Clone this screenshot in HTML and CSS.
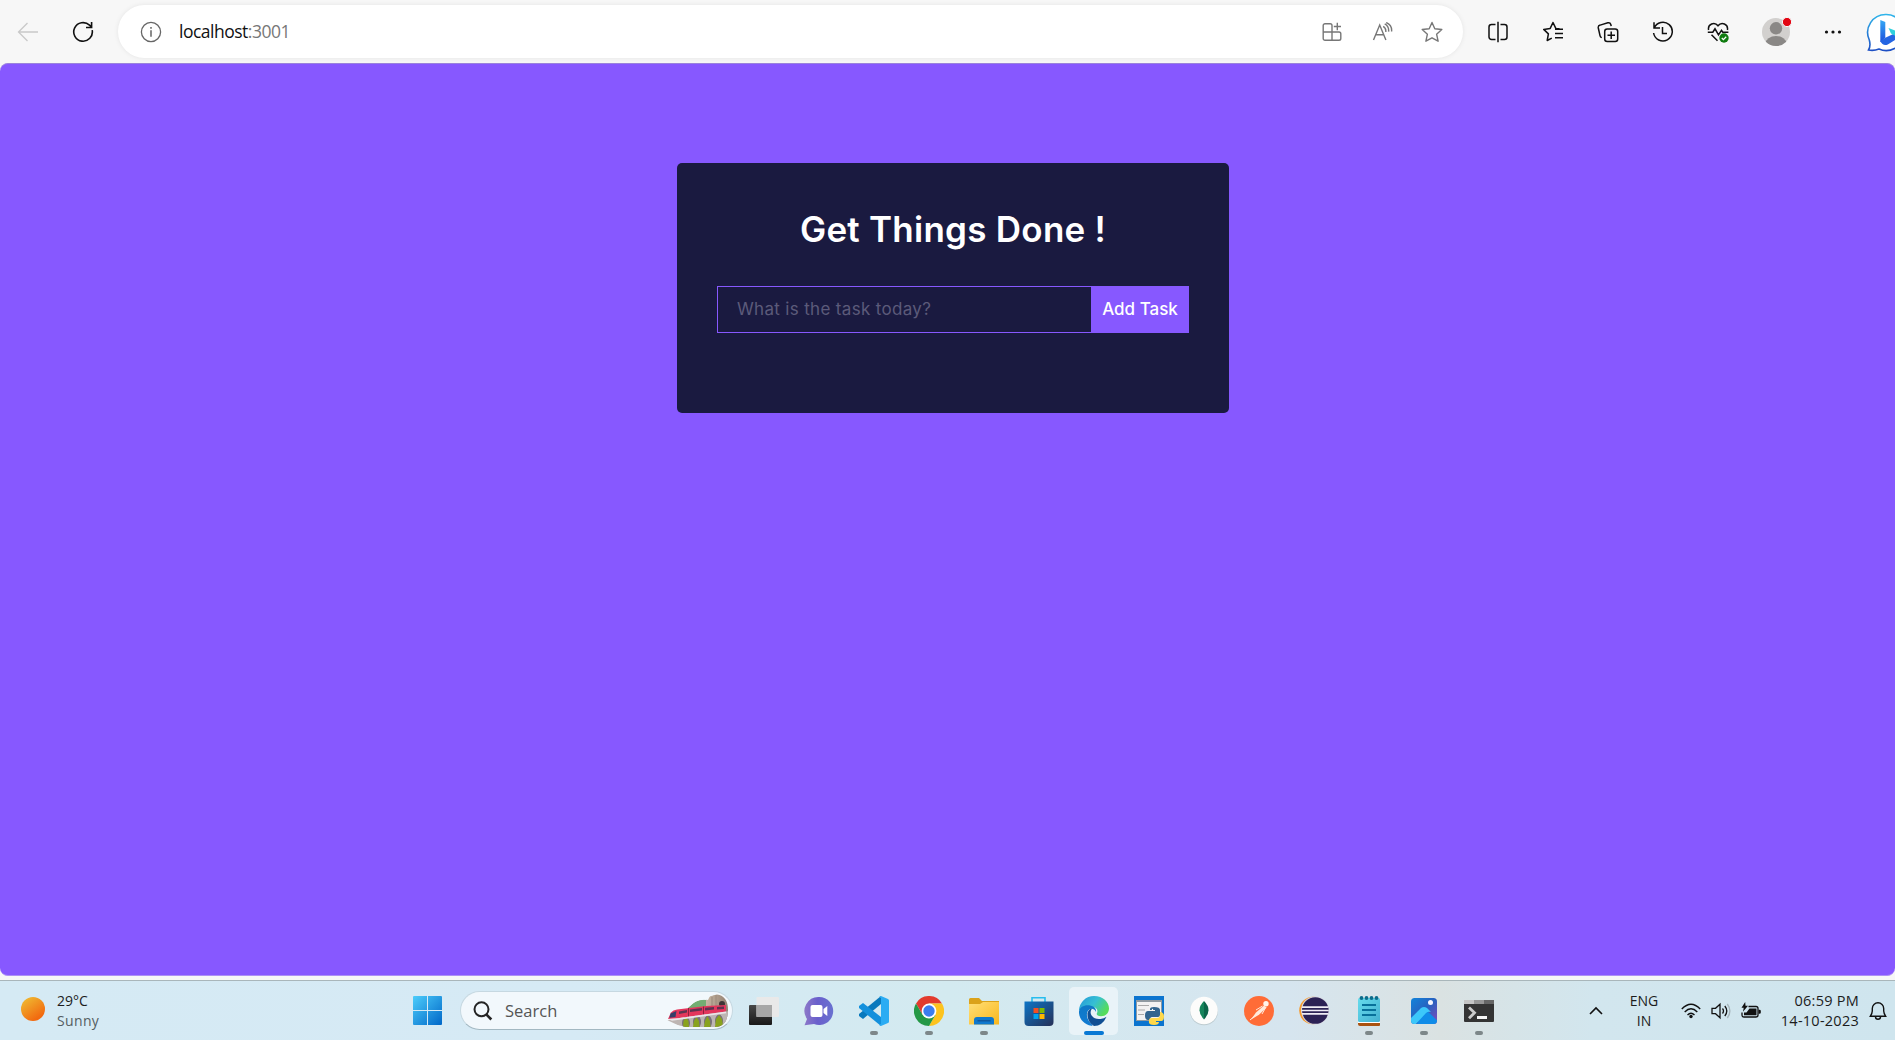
FILE: index.html
```html
<!DOCTYPE html>
<html lang="en">
<head>
<meta charset="utf-8">
<title>Get Things Done</title>
<link rel="stylesheet" href="styles.css">
</head>
<body>
<div class="screen">
  <header class="toolbar">
    <div class="nav-btn back"><svg width="22" height="20" viewBox="0 0 22 20" fill="none" stroke="#c9c9c9" stroke-width="1.3"><path d="M21 10H1.5M10.5 1 1.5 10l9 9"/></svg></div>
    <div class="nav-btn reload"><svg width="22" height="22" viewBox="0 0 22 22" fill="none" stroke="#111" stroke-width="1.6"><path d="M20.2 9.2A9.3 9.3 0 1 1 17.5 4.2L19.4 6M19.6 1v5.5H14"/></svg></div>
    <div class="omnibox">
      <svg class="info" width="22" height="22" viewBox="0 0 22 22" fill="none" stroke="#666" stroke-width="1.3"><circle cx="11" cy="11" r="9.6"/><path d="M11 9.3v6.5M11 6v1.7" stroke-width="1.5"/></svg>
      <span class="url">localhost<span class="port">:3001</span></span>
      <div class="box-icon"><svg width="20" height="20" viewBox="0 0 20 20" fill="none" stroke="#777" stroke-width="1.4"><path d="M10 18.2H3a1.8 1.8 0 0 1-1.8-1.8V3.6A1.8 1.8 0 0 1 3 1.8h5.2A1.8 1.8 0 0 1 10 3.6zM1.2 10H17a1.8 1.8 0 0 1 1.8 1.8v4.6a1.8 1.8 0 0 1-1.8 1.8h-7M15.3.8v7.4M11.8 4.5h7.2"/></svg></div>
      <div class="box-icon"><svg width="21" height="20" viewBox="0 0 21 20" fill="none" stroke="#777" stroke-width="1.4"><path d="M1.5 18 7.7 3l6.2 15M3.7 12.8h8M11.2 4.3q3 1.6 2.6 5.7M12.7 1.8q4.5 2.4 3.9 7.8M14.2.5q6 2.5 5.4 9"/></svg></div>
      <div class="box-icon"><svg width="22" height="22" viewBox="0 0 22 22" fill="none" stroke="#777" stroke-width="1.4" stroke-linejoin="round"><path d="m11 1.5 2.8 6.2 7 .8-5.2 4.7 1.5 7L11 16.8l-6.1 3.4 1.5-7L1.2 8.5l7-.8z"/></svg></div>
    </div>
    <div class="tool"><svg width="20" height="22" viewBox="0 0 20 22" fill="none" stroke="#111" stroke-width="1.5"><path d="M7.5 3.5H3.5A2.5 2.5 0 0 0 1 6v10a2.5 2.5 0 0 0 2.5 2.5h4M12.5 3.5h4A2.5 2.5 0 0 1 19 6v10a2.5 2.5 0 0 1-2.5 2.5h-4M10 .8v20.4"/></svg></div>
    <div class="tool"><svg width="22" height="22" viewBox="0 0 22 22" fill="none" stroke="#111" stroke-width="1.5" stroke-linejoin="round"><path d="M17.5 7.8 13.8 7.4 11 1.5 8.2 7.4l-6.5 1 4.7 4.5-1.2 6.6 4.6-2.4M13 8.3h8M13 12.5h8M13 16.7h8"/></svg></div>
    <div class="tool"><svg width="22" height="22" viewBox="0 0 22 22" fill="none" stroke="#111" stroke-width="1.5"><rect x="7.7" y="8" width="13" height="12.5" rx="2.5"/><path d="M14.2 10.5v7.5M10.5 14.2H18M4.8 16.6a2.5 2.5 0 0 1-1.8-2L1.3 7a2.5 2.5 0 0 1 1.9-2.9l7.6-2.3a2.5 2.5 0 0 1 3 1.7l.4 1.7"/></svg></div>
    <div class="tool"><svg width="22" height="22" viewBox="0 0 22 22" fill="none" stroke="#111" stroke-width="1.5"><path d="M2.2 7A9.4 9.4 0 1 1 1.6 12M2 1.3V7h6M10.5 6v6.5h4.5"/></svg></div>
    <div class="tool"><svg width="22" height="22" viewBox="0 0 22 22" fill="none" stroke="#111" stroke-width="1.5"><path d="M1.6 9C.5 3 7.5.3 11 4.8 14.5.3 21.5 3 20.4 9M.8 11.2h5L8 7.8l3.5 6 3-4.5 1.3 1.9h5.600M4.5 13.8l6 6"/><circle cx="17" cy="17" r="4.7" fill="#107c10" stroke="none"/><path d="m14.8 17 1.6 1.6 2.8-2.9" stroke="#fff" stroke-width="1.3"/></svg></div>
    <div class="tool profile"><svg width="32" height="32" viewBox="0 0 32 32"><defs><clipPath id="face"><circle cx="16" cy="16" r="14"/></clipPath></defs><circle cx="16" cy="16" r="14" fill="#d2d0ce"/><g clip-path="url(#face)" fill="#8a8886"><circle cx="16" cy="12.3" r="6.2"/><ellipse cx="16" cy="27.500" rx="10.5" ry="7.5"/></g><circle cx="27" cy="6" r="4.6" fill="#e30613" stroke="#f7f7f7"/></svg></div>
    <div class="tool more"><svg width="18" height="4" viewBox="0 0 18 4" fill="#111"><circle cx="2.500" cy="2" r="1.6"/><circle cx="9" cy="2" r="1.6"/><circle cx="15.5" cy="2" r="1.6"/></svg></div>
    <div class="bing"><svg width="42" height="42" viewBox="0 0 42 42"><defs><linearGradient id="bub" x1="0" y1="0" x2="0" y2="1"><stop offset="0" stop-color="#2fb4ea"/><stop offset="1" stop-color="#1d4fc4"/></linearGradient><linearGradient id="bb" x1="0" y1="0" x2="0" y2="1"><stop offset="0" stop-color="#35a9f5"/><stop offset="1" stop-color="#1b4fdc"/></linearGradient></defs><path d="M20 3.500a18 18 0 1 1-7 34.500Q8 40 2.500 39 5 35 3.300 29A18 18 0 0 1 20 3.500z" fill="#fff" stroke="url(#bub)" stroke-width="1.6"/><path d="m14.300 9 5 1.900v15.800l-5 4.500z" fill="url(#bb)"/><path d="m14.300 30 5-3.300 8-3.700 8 2-13.500 8.500q-5 2-7.500-3.500z" fill="#2465e2"/><path d="m22.500 17 8 3.200v5.500L25 22.600z" fill="#2ed0dd"/></svg></div>
  </header>

  <main class="page">
    <section class="card">
      <h1 class="title"><span class="title-text">Get Things Done !</span></h1>
      <form class="task-form">
        <input class="task-input" type="text" placeholder="What is the task today?">
        <button class="task-btn" type="button">Add Task</button>
      </form>
    </section>
  </main>

  <footer class="taskbar">
    <div class="weather">
      <span class="sun"></span>
      <div class="stack"><span>29°C</span><span class="muted">Sunny</span></div>
    </div>
    <div class="start"><svg width="29" height="29" viewBox="0 0 29 29"><defs><linearGradient id="win" x1="0" y1="0" x2="1" y2="1"><stop offset="0" stop-color="#4ccdfb"/><stop offset="1" stop-color="#0067c8"/></linearGradient></defs><path d="M1 0h13v14H0V1a1 1 0 0 1 1-1zM15 0h13a1 1 0 0 1 1 1v13H15zM0 15h14v14H1a1 1 0 0 1-1-1zM15 15h14v13a1 1 0 0 1-1 1H15z" fill="url(#win)"/></svg></div>
    <div class="search">
      <svg width="20" height="20" viewBox="0 0 20 20" fill="none" stroke="#242424" stroke-width="2"><circle cx="8.500" cy="8.300" r="7"/><path d="m13.300 13.300 5 5.200" stroke-width="2.600"/></svg>
      <span class="search-label">Search</span>
      <svg class="train" width="64" height="34" viewBox="0 0 64 34">
        <defs>
          <clipPath id="hill"><path d="M1 27 24 12Q31 5 38 5.500L42 6 44 2 51 .5Q62 2 62 16 62 32 50 33H20Q10 31 1 28z"/></clipPath>
          <linearGradient id="rock" x1="0" y1="0" x2="1" y2="0"><stop offset="0" stop-color="#c8b7a3"/><stop offset="1" stop-color="#8d7a6c"/></linearGradient>
        </defs>
        <g clip-path="url(#hill)">
          <path d="M22 14Q30 4 42 6v9z" fill="#72ae72"/>
          <path d="M40 4 50 0h14v33H40z" fill="url(#rock)"/>
          <path d="M46 3v9M50 1v11" stroke="#a08f7f" stroke-width="1.200"/>
          <circle cx="56" cy="10" r="3" fill="#3d3336"/>
          <path d="M1 26 63 17v17H18z" fill="#bdb5b3"/>
          <g fill="#77707b"><ellipse cx="20" cy="29" rx="4" ry="6"/><ellipse cx="31" cy="28" rx="4" ry="6.500"/><ellipse cx="42" cy="28" rx="4" ry="6.500"/><ellipse cx="53" cy="27" rx="4" ry="6.500"/></g>
          <g fill="#89a21d"><path d="m17 33 .5-6 2.500-4 2.500 4 .5 6zM27 33l1-6 2.500-4 2.500 4 .5 6zM38 33l1-6 2.500-5 2.500 5 .5 6zM49 33l1-8 3-4 3 4 1 8z"/></g>
        </g>
        <path d="M2 25 5 18.500Q7 16 11 15.500L40 12l20-1v6.500L10 24.500z" fill="#e3365c"/>
        <path d="m4.500 19.500 6-2.500-1 6-6 .8z" fill="#353f69"/>
        <path d="m13 17.500 8-1.500v2.500L13 20zM24 15.500l12-1.500v2.500l-12 1.500zM39 13.700l9-.6v2.500l-9 1zM51 12.900l7-.4v2.500l-7 .6z" fill="#5d3350"/>
        <path d="M22.500 14v8.500M37.500 12.500v8" stroke="#8f1f3d"/>
        <path d="m2 25 8-.5L60 17.500v1.800L6 26.800z" fill="#e9e5e8"/>
      </svg>
    </div>
    <div class="apps">
      <div class="app"><svg width="30" height="30" viewBox="0 0 30 30"><defs><linearGradient id="tv" x1="0" y1="0" x2="0" y2="1"><stop offset="0" stop-color="#484848"/><stop offset="1" stop-color="#191919"/></linearGradient></defs><rect x="0" y="9" width="23" height="20" rx="1" fill="url(#tv)"/><rect x="7.500" y="1" width="22.500" height="20" rx="1" fill="#e9e9e9"/><path d="M7.500 9H23v12H7.500z" fill="#a7a7a7"/></svg></div>
      <div class="app"><svg width="30" height="30" viewBox="0 0 30 30"><defs><linearGradient id="chat" x1="0" y1="0" x2="1" y2="0"><stop offset="0" stop-color="#8c78c8"/><stop offset=".45" stop-color="#6a5fcc"/><stop offset="1" stop-color="#6971d0"/></linearGradient></defs><path d="M15 1a14 14 0 1 1-5 27L.5 29.200 3 23A14 14 0 0 1 15 1z" fill="url(#chat)"/><rect x="6.500" y="9" width="12" height="12" rx="2" fill="#fff"/><path d="m19.500 13 3.800-3v10l-3.800-3z" fill="#fff"/></svg></div>
      <div class="app running"><svg width="30" height="30" viewBox="0 0 30 30"><path d="M22 0v8L4 23 0 20v-2z" fill="#0879bd"/><path d="M4 7 22 21v9L0 12v-2z" fill="#1390dc"/><path d="m22 0 7 3q1 .5 1 1.500v21q0 1-1 1.500l-7 3-2-1 2-1V2l-2-1z" fill="#2bacf3"/></svg></div>
      <div class="app running"><svg width="30" height="30" viewBox="0 0 30 30"><path d="M2 7.500a15 15 0 0 1 26 0H15L8.500 18.700z" fill="#e33b2e"/><path d="M28 7.500A15 15 0 0 1 15 30l6.500-11.300L15 7.500z" fill="#fcc31e"/><path d="M2 7.500A15 15 0 0 0 15 30l6.500-11.300h-13z" fill="#249846"/><circle cx="15" cy="15" r="7.400" fill="#fff"/><circle cx="15" cy="15" r="5.700" fill="#3b7df0"/></svg></div>
      <div class="app running"><svg width="30" height="30" viewBox="0 0 30 30"><defs><linearGradient id="fold" x1="0" y1="0" x2="1" y2="1"><stop offset="0" stop-color="#ffdf78"/><stop offset="1" stop-color="#f9b71c"/></linearGradient></defs><path d="M1.500 2H10l3 3h17v6H0V3.500A1.500 1.500 0 0 1 1.500 2z" fill="#dba21a"/><path d="M0 8h11l3-2h16v22.500H0z" fill="url(#fold)"/><path d="M5 28.500V24a3 3 0 0 1 3-3h14a3 3 0 0 1 3 3v4.500z" fill="#0f78cd"/><path d="M8.500 24.800h13" stroke="#114f91" stroke-width="1.200"/></svg></div>
      <div class="app"><svg width="30" height="30" viewBox="0 0 30 30"><defs><linearGradient id="store" x1="0" y1="0" x2="1" y2="1"><stop offset="0" stop-color="#0d75c6"/><stop offset="1" stop-color="#263057"/></linearGradient></defs><path d="M8 6.500V1.800h13v4.700" fill="none" stroke="#27bdee" stroke-width="1.600"/><path d="M.5 5.500h29V26a4 4 0 0 1-4 4h-21a4 4 0 0 1-4-4z" fill="url(#store)"/><path d="M9.500 12h5v5h-5z" fill="#f25022"/><path d="M15.500 12h5v5h-5z" fill="#7fba00"/><path d="M9.500 18h5v5h-5z" fill="#00a4ef"/><path d="M15.500 18h5v5h-5z" fill="#ffb900"/></svg></div>
      <div class="app active"><svg width="30" height="30" viewBox="0 0 30 30"><defs><linearGradient id="ed1" x1="0" y1="0" x2="1" y2=".5"><stop offset="0" stop-color="#2397d8"/><stop offset=".55" stop-color="#36bfd4"/><stop offset="1" stop-color="#55dc5b"/></linearGradient><linearGradient id="ed2" x1="0" y1="0" x2="0" y2="1"><stop offset="0" stop-color="#0e79c6"/><stop offset="1" stop-color="#127bd3"/></linearGradient></defs><path d="M0 14.500A15 15 0 0 1 15 0c9 0 15 6 15 12.500 0 4.500-3.300 7.700-8 7.700-3.500 0-5-1.500-4-3.200 1-1.800.5-6-5-6Q4 9.500 0 14.500z" fill="url(#ed1)"/><path d="M0 15.500C1 9 9.500 7.500 15 11q2.500 2 2 5-1.500-3.500-5-3.300c-5 1-6.500 9.300 1.500 16.300q-1 .9 1.500 1C6 30-.5 23 0 15.500z" fill="url(#ed2)"/><path d="M8.500 17q1.500-4.500 4.500-4.500c-4 5 1 11.500 8.500 10.500q3.500-.5 6-2.200Q23.500 30 15 30q-7-4-6.500-13z" fill="#114f93"/></svg></div>
      <div class="app"><svg width="30" height="30" viewBox="0 0 30 30"><path d="M0 0h30v30H0z" fill="#0b74cf"/><path d="M2 4h26v21H2z" fill="#909aa1"/><path d="M3 6h24v18H3z" fill="#f2f2f2"/><path d="M4 9.500h11M4 14h7M4 18.500h6" stroke="#aaa" stroke-width="1.200"/><path d="M20 11q6 0 6 3v5q0 2-2 2h-6q-2 0-2 3h-2q-3 0-3-4.500t3-4.500h7v-1h-5v-1q0-2 4-2z" fill="#32658f"/><path d="M20 29q-6 0-5-4v-1q0-2 3-2h5q3 0 3-3v-3q4 0 4 4.500t-3 4.500h-5v1h3q0 3-5 3z" fill="#ffd84a"/><circle cx="18.500" cy="13.500" r=".7" fill="#fff"/></svg></div>
      <div class="app"><svg width="30" height="30" viewBox="0 0 30 30"><circle cx="15" cy="15.300" r="14" fill="#bccbd0"/><circle cx="15" cy="14.500" r="13.800" fill="#fcfcfb"/><path d="M15 5q-9 9 0 18.500z" fill="#15845b"/><path d="M15 5q9 9 0 18.500z" fill="#0b6549"/></svg></div>
      <div class="app"><svg width="30" height="30" viewBox="0 0 30 30"><circle cx="15" cy="15" r="15" fill="#ff6c37"/><circle cx="22" cy="7.700" r="2.700" fill="#fff4ea"/><path d="m20 9.500 2.500 2-7.500 7.300-8 4.700 5-7z" fill="#ffeadc"/><path d="m12 14 6.500-4M6 24l7-6M18 18l4-7" stroke="#ffeadc"/></svg></div>
      <div class="app"><svg width="30" height="30" viewBox="0 0 30 30"><circle cx="14" cy="14.500" r="13.800" fill="#f79a2b"/><circle cx="16" cy="14.500" r="14" fill="#d9d7df"/><circle cx="16.300" cy="14.500" r="13.300" fill="#2c2255"/><path d="M3 11.200h26.500M2.500 14.500h27.300M3 17.800h26.500" stroke="#f0edf5" stroke-width="1.700"/></svg></div>
      <div class="app running"><svg width="30" height="30" viewBox="0 0 30 30"><defs><linearGradient id="note" x1="0" y1="0" x2="1" y2="1"><stop offset="0" stop-color="#66dced"/><stop offset="1" stop-color="#44afd0"/></linearGradient></defs><path d="M4 25h22v4H6a2 2 0 0 1-2-2z" fill="#fff"/><path d="M4 27h22v2q0 1-1 1H6q-2 0-2-2z" fill="#aa5210"/><rect x="4" y="2" width="22" height="24" rx="1.500" fill="url(#note)"/><path d="M8 9h14M8 14h14M8 19h14" stroke="#08709a" stroke-width="1.900"/><g fill="#0c6c8b"><circle cx="7.500" cy="2" r="1.900"/><circle cx="12.500" cy="2" r="1.900"/><circle cx="17.500" cy="2" r="1.900"/><circle cx="22.500" cy="2" r="1.900"/></g></svg></div>
      <div class="app running"><svg width="30" height="30" viewBox="0 0 30 30"><defs><linearGradient id="ph" x1="0" y1="0" x2="1" y2="1"><stop offset="0" stop-color="#1284da"/><stop offset=".5" stop-color="#2860bf"/><stop offset="1" stop-color="#8648bc"/></linearGradient><clipPath id="phc"><rect x="2" y="2" width="26" height="26" rx="3.500"/></clipPath></defs><g clip-path="url(#phc)"><path d="M2 2h26v26H2z" fill="url(#ph)"/><path d="m8 28 7-16 15 14v3z" fill="#108ce8"/><path d="m2 22 10-10q3-2 6 0l4 4q-3-1-5 1L6 29H2z" fill="#3cc7fa"/></g><circle cx="21.500" cy="6.500" r="2.500" fill="#f4f4ff"/></svg></div>
      <div class="app running"><svg width="30" height="30" viewBox="0 0 30 30"><path d="M0 4h30v21q0 1-1 1H1q-1 0-1-1z" fill="#343434"/><path d="M0 4h10v4H0z" fill="#c5c5c5"/><path d="M10 4h10v4H10z" fill="#979797"/><path d="M20 4h10v4H20z" fill="#666"/><path d="m5 11.500 5.500 5.300L5 22.300" fill="none" stroke="#ccc" stroke-width="2.800"/><path d="M13 20h10v3H13z" fill="#f5f5f5"/></svg></div>
    </div>
    <div class="tray">
      <div class="chevron"><svg width="14" height="9" viewBox="0 0 14 9" fill="none" stroke="#111" stroke-width="1.600"><path d="M1 8 7 2l6 6"/></svg></div>
      <div class="stack lang"><span>ENG</span><span>IN</span></div>
      <div class="status">
        <svg width="20" height="16" viewBox="0 0 20 16" fill="none" stroke="#111" stroke-width="1.400"><path d="M.8 6q9.200-9.500 18.400 0M3.700 9q6.300-6.500 12.600 0M6.500 12Q10 8.500 13.500 12"/><circle cx="10" cy="13.500" r="1.700" fill="#111" stroke="none"/></svg>
        <svg width="20" height="18" viewBox="0 0 20 18" fill="none" stroke="#111" stroke-width="1.300"><path d="M1 6.300h3.500L9 2.300v13.400l-4.500-4H1zM11.500 6.500q2 2.500 0 5M13.800 4q4 5 0 10"/><path d="M16.300 2q5.200 7 0 14" stroke="#a6b5bb"/></svg>
        <svg width="20" height="18" viewBox="0 0 20 18"><path d="M7.500 4.500H15q2 0 2 2v6.500q0 2-2 2H3q-2 0-2-2v-2.500" fill="none" stroke="#111" stroke-width="1.300"/><path d="M8.500 6.500h7v6.700H3v-2.700h2.500zM17.500 7.800h1q1.300 0 1.300 1.200v1.500q0 1.200-1.300 1.200h-1zM4.200 0 .5 5.800h2.200L2 9.800l5-6H4.500z" fill="#111"/></svg>
      </div>
      <div class="stack clock"><span>06:59 PM</span><span>14-10-2023</span></div>
      <div class="bell"><svg width="18" height="20" viewBox="0 0 18 20" fill="none" stroke="#111" stroke-width="1.400"><path d="M1.300 15.300q2-3.300 2-5.300V7.500a5.700 5.700 0 0 1 11.400 0V10q0 2 2 5.300zM6.500 15.700q0 2.500 2.500 2.500t2.500-2.500"/></svg></div>
    </div>
  </footer>
</div>
</body>
</html>
```
FILE: styles.css
```css
* { box-sizing: border-box; }
body { margin: 0; background: #f7f7f7; font-family: "Open Sans", "Noto Sans", sans-serif; }
svg { display: block; flex: none; }
.screen { width: 1895px; height: 1040px; display: flex; flex-direction: column; overflow: hidden; }

/* Browser toolbar */
.toolbar { height: 63px; flex: none; display: flex; align-items: center; background: #f7f7f7; overflow: hidden; }
.nav-btn { display: flex; height: 62px; align-items: center; justify-content: center; flex: none; }
.back { width: 56px; }
.reload { width: 54px; }
.omnibox { width: 1345px; height: 53px; margin-left: 8px; margin-right: 7px; flex: none; display: flex; align-items: center; padding: 0 6px 0 22px; background: #fff; border-radius: 27px; box-shadow: 0 0 5px rgba(0, 0, 0, .08); }
.url { flex: 1; margin: -1px 0 0 17px; font-size: 17.5px; letter-spacing: -.5px; line-height: 24px; color: #111; }
.port { color: #777; }
.box-icon { width: 50px; display: flex; justify-content: center; flex: none; }
.tool { width: 55px; display: flex; justify-content: center; flex: none; }
.profile { width: 61px; }
.more { width: 54px; }
.bing { margin-left: 6px; width: 29px; height: 42px; overflow: hidden; }

/* Web page */
.page { height: 913px; flex: none; background: #8758ff; border-radius: 8px; padding-top: 100px; border-top: 1px solid #9a83dc; border-bottom: 1px solid #ad90f5; }
.card { width: 552px; height: 250px; margin: -1px 0 0 677px; background: #1a1a40; border-radius: 5px; padding: 40px; font-family: Inter, sans-serif; }
.title { height: 52px; margin: 0 0 31px; display: flex; align-items: center; justify-content: center; color: #fff; font-size: 35px; font-weight: 600; line-height: 52px; white-space: nowrap; }
.title-text { letter-spacing: .25px; }
.task-form { display: flex; height: 47px; }
.task-input { width: 374px; height: 47px; padding: 0 0 2px 19px; border: 1px solid #8758ff; border-right: 0; background: none; outline: none; color: #fff; font: 17px Inter, sans-serif; letter-spacing: .33px; }
.task-input::placeholder { color: #5c5a7a; }
.task-btn { flex: 1; padding: 0 0 1px; border: 0; background: #8758ff; color: #fff; font: 500 17px Inter, sans-serif; }

/* Desktop taskbar */
.taskbar { height: 60px; margin-top: 4px; flex: none; display: flex; align-items: center; border-top: 1px solid #a9b6ba; background: linear-gradient(90deg, #d5eaf4 0%, #d6eaf5 30%, #d3eaf0 50%, #d6e5ef 68%, #dae2e2 76%, #d2e6ee 84%, #cfe5ee 100%); color: #1c1c1c; }
.weather { width: 400px; display: flex; align-items: center; padding-left: 21px; flex: none; }
.sun { width: 24px; height: 24px; margin: -3px 12px 0 0; border-radius: 50%; background: linear-gradient(145deg, #efc335, #f26a10 80%); }
.stack { display: flex; flex-direction: column; font-size: 14px; line-height: 20px; white-space: nowrap; }
.muted { color: #555e62; letter-spacing: .35px; }
.start { width: 60px; padding-left: 13px; flex: none; }
.search { width: 273px; height: 39px; display: flex; align-items: center; padding: 0 2px 0 12px; border-radius: 20px; background: #f2f8fc; border: 1px solid #c6d8e1; border-bottom-color: #a3b8c2; flex: none; }
.search-label { flex: 1; margin-left: 12px; font-size: 16.5px; color: #555; }
.apps { display: flex; margin-left: 6px; }
.app { position: relative; width: 49px; height: 48px; margin-right: 6px; display: flex; align-items: center; justify-content: center; border-radius: 5px; }
.running::after, .active::after { content: ""; position: absolute; bottom: 0; left: 50%; width: 8px; height: 4px; margin-left: -4px; border-radius: 2px; background: #7d8789; }
.active { background: #e9f3f8; }
.active::after { width: 20px; margin-left: -10px; background: #0878d4; }
.tray { flex: 1; display: flex; align-items: center; justify-content: flex-end; padding-right: 8px; }
.lang { width: 36px; margin: 0 19px 0 23px; align-items: center; }
.status { display: flex; align-items: center; gap: 10px; }
.clock { width: 80px; margin: 0 10px 0 18px; align-items: flex-end; font-size: 14.5px; letter-spacing: .25px; }
```
